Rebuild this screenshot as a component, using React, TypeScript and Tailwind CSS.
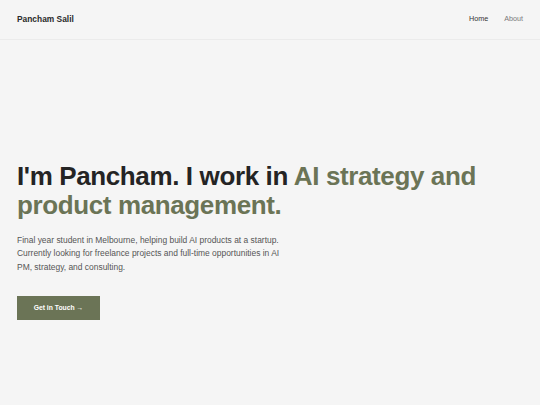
import React from "react";

const App = () => {
  return (
    <div className="min-h-screen bg-[#f5f5f5] font-['Liberation_Sans',Arial,sans-serif] text-[#222]">
      {/* Header */}
      <header className="flex h-[40px] items-center justify-between border-b border-[#ebebeb] px-[17px] pb-px">
        <div className="text-[8.4px] font-bold text-[#2a2a2a]">Pancham Salil</div>
        <nav className="flex items-center gap-[16px] text-[7.2px]">
          <a href="#" className="text-[#333]">
            Home
          </a>
          <a href="#" className="text-[#7a7a7a]">
            About
          </a>
        </nav>
      </header>

      {/* Hero */}
      <section className="flex min-h-[402px] flex-col justify-center px-[17px]">
        <h1 className="text-[26px] font-bold leading-[29px] tracking-[-0.38px] text-[#242424]">
          I'm Pancham. I work in{" "}
          <span className="text-[#6b7456]">AI strategy and product management.</span>
        </h1>
        <p className="mt-[14px] max-w-[270px] text-[8.45px] leading-[13.3px] text-[#555]">
          Final year student in Melbourne, helping build AI products at a startup. Currently
          looking for freelance projects and full-time opportunities in AI PM, strategy, and
          consulting.
        </p>
        <div className="mt-[19px]">
          <a
            href="#"
            className="inline-flex h-[24px] w-[83px] items-center justify-center bg-[#6b7456] text-[6.8px] font-bold text-white"
          >
            Get in Touch →
          </a>
        </div>
      </section>
    </div>
  );
};

export default App;
